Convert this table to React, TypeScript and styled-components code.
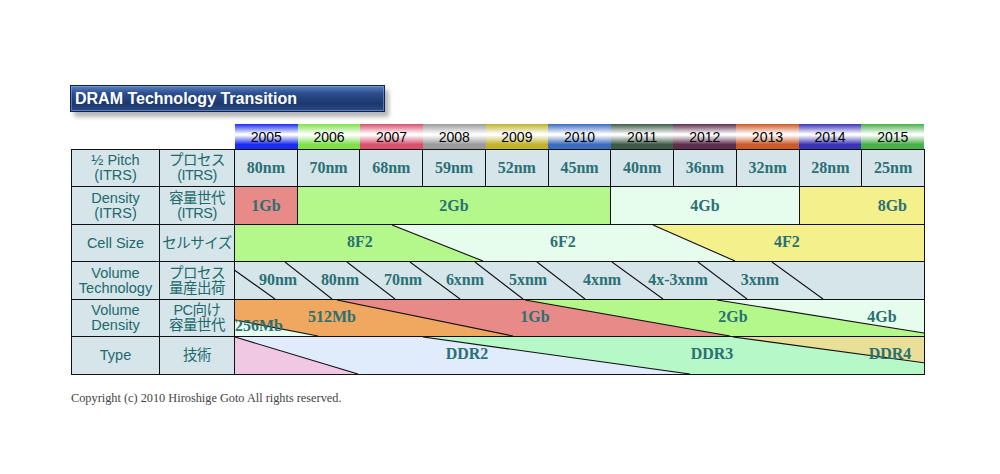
import React from "react";
import styled, { createGlobalStyle } from "styled-components";

const GlobalStyle = createGlobalStyle`
  html, body { margin: 0; padding: 0; background: #ffffff; }
  body { font-family: "Liberation Sans", Arial, sans-serif; }
`;

const TEAL = "#22696d";
const DATA_TEAL = "#2b7074";
const LABEL_BG = "#d5e5e9";

const Page = styled.div`
  padding: 85px 0 0 70px;
  width: 1000px;
  height: 474px;
  box-sizing: border-box;
`;

const TitleBar = styled.div`
  width: 315px;
  height: 27px;
  box-sizing: border-box;
  border: 1px solid #0b2350;
  background: linear-gradient(180deg, #5b7fbd 0%, #2c4d8c 30%, #1b386f 70%, #2a4a86 100%);
  box-shadow: inset 0 0 0 1px rgba(140, 170, 220, 0.55), 4px 5px 4px rgba(0, 0, 0, 0.28);
  color: #ffffff;
  font-family: "Liberation Sans", Arial, sans-serif;
  font-weight: bold;
  font-size: 16px;
  line-height: 25px;
  padding-left: 4px;
  white-space: nowrap;
`;

const Chart = styled.div`
  margin: 12px 0 0 1px;
  width: 854px;
`;

const HeaderRow = styled.div`
  display: flex;
  margin-left: 164px;
  width: 689px;
  height: 25px;
`;

const YearCell = styled.div<{ $c: string }>`
  flex: 1;
  display: flex;
  align-items: center;
  justify-content: center;
  background: linear-gradient(180deg, ${(p) => p.$c} 0%, #ffffff 40%, #ffffff 44%, ${(p) => p.$c} 82%, ${(p) => p.$c} 100%);
  font-family: "Liberation Sans", Arial, sans-serif;
  font-size: 14px;
  color: #000000;
  padding-top: 1px;
  box-sizing: border-box;
`;

const Body = styled.div`
  display: grid;
  grid-template-columns: 87px 74px repeat(11, 1fr);
  grid-template-rows: 36px 37px 36px 37px 36px 37px;
  gap: 1px;
  background: #111111;
  border: 1px solid #111111;
  width: 854px;
  box-sizing: border-box;
`;

const LabelCell = styled.div<{ $jp?: boolean }>`
  background: ${LABEL_BG};
  display: flex;
  align-items: center;
  justify-content: center;
  text-align: center;
  color: ${TEAL};
  font-family: ${(p) =>
    p.$jp
      ? `"Liberation Sans", "Noto Sans CJK JP", sans-serif`
      : `"Liberation Sans", Arial, sans-serif`};
  font-size: 14.5px;
  line-height: 15px;
  white-space: nowrap;
  letter-spacing: ${(p) => (p.$jp ? "-0.5px" : "0")};
`;

const DataCell = styled.div<{ $bg: string; $span?: number; $end?: boolean }>`
  background: ${(p) => p.$bg};
  grid-column: span ${(p) => p.$span ?? 1};
  display: flex;
  align-items: center;
  justify-content: ${(p) => (p.$end ? "flex-end" : "center")};
  padding-right: ${(p) => (p.$end ? "17px" : "0")};
  font-family: "Liberation Serif", "Times New Roman", serif;
  font-weight: bold;
  font-size: 16px;
  color: ${DATA_TEAL};
`;

const DiagramCell = styled.div`
  grid-column: span 11;
  overflow: hidden;
  background: ${LABEL_BG};
  svg {
    display: block;
    width: 100%;
    height: 100%;
  }
  text {
    font-family: "Liberation Serif", "Times New Roman", serif;
    font-weight: bold;
    font-size: 16px;
    fill: ${DATA_TEAL};
  }
`;

const Copyright = styled.div`
  margin-top: 16px;
  font-family: "Liberation Serif", "Times New Roman", serif;
  font-size: 12.3px;
  color: #444444;
`;

const years: [string, string][] = [
  ["2005", "#1b2cf5"],
  ["2006", "#7fe04a"],
  ["2007", "#d8506e"],
  ["2008", "#9a9a9a"],
  ["2009", "#c0b22a"],
  ["2010", "#3c6cc0"],
  ["2011", "#3e5a48"],
  ["2012", "#5e2e4e"],
  ["2013", "#cc5a28"],
  ["2014", "#3a34b8"],
  ["2015", "#48b048"],
];

const pitches = ["80nm", "70nm", "68nm", "59nm", "52nm", "45nm", "40nm", "36nm", "32nm", "28nm", "25nm"];

type Poly = { pts: string; fill: string };
type Line = [number, number, number, number];
type Label = { x: number; y: number; t: string; anchor?: "start" | "middle" };

const Diagram: React.FC<{ polys: Poly[]; lines: Line[]; labels: Label[] }> = ({ polys, lines, labels }) => (
  <DiagramCell>
    <svg viewBox="0 0 689 36" preserveAspectRatio="none">
      {polys.map((p, i) => (
        <polygon key={i} points={p.pts} fill={p.fill} />
      ))}
      {lines.map(([x1, y1, x2, y2], i) => (
        <line key={i} x1={x1} y1={y1} x2={x2} y2={y2} stroke="#111" strokeWidth={1.1} />
      ))}
      {labels.map((l, i) => (
        <text key={i} x={l.x} y={l.y} textAnchor={l.anchor ?? "middle"} dominantBaseline="central">
          {l.t}
        </text>
      ))}
    </svg>
  </DiagramCell>
);

const cellSize = {
  polys: [
    { pts: "0,0 157,0 248,36 0,36", fill: "#b4f88c" },
    { pts: "157,0 418,0 500,36 248,36", fill: "#e6fcec" },
    { pts: "418,0 689,0 689,36 500,36", fill: "#f4f08c" },
  ],
  lines: [
    [157, 0, 248, 36],
    [418, 0, 500, 36],
  ] as Line[],
  labels: [
    { x: 125, y: 17, t: "8F2" },
    { x: 328, y: 17, t: "6F2" },
    { x: 552, y: 17, t: "4F2" },
  ],
};

const volTech = {
  polys: [] as Poly[],
  lines: [
    [-12, 0, 40, 36],
    [50, 0, 97, 36],
    [112, 0, 160, 36],
    [175, 0, 225, 36],
    [240, 0, 288, 36],
    [302, 0, 350, 36],
    [377, 0, 428, 36],
    [463, 0, 512, 36],
    [537, 0, 588, 36],
  ] as Line[],
  labels: [
    { x: 43, y: 17, t: "90nm" },
    { x: 105, y: 17, t: "80nm" },
    { x: 168, y: 17, t: "70nm" },
    { x: 230, y: 17, t: "6xnm" },
    { x: 293, y: 17, t: "5xnm" },
    { x: 367, y: 17, t: "4xnm" },
    { x: 443, y: 17, t: "4x-3xnm" },
    { x: 525, y: 17, t: "3xnm" },
  ],
};

const volDensity = {
  polys: [
    { pts: "0,0 689,0 689,36 0,36", fill: "#e6fcec" },
    { pts: "290,0 482,0 689,33 689,36 495,36", fill: "#b4f88c" },
    { pts: "102,0 290,0 495,36 278,36", fill: "#e88a88" },
    { pts: "0,0 102,0 278,36 83,36 0,20", fill: "#f0a860" },
    { pts: "0,20 83,36 0,36", fill: "#e8fcf0" },
  ],
  lines: [
    [0, 20, 83, 36],
    [102, 0, 278, 36],
    [290, 0, 495, 36],
    [482, 0, 689, 33],
  ] as Line[],
  labels: [
    { x: 97, y: 17, t: "512Mb" },
    { x: 300, y: 17, t: "1Gb" },
    { x: 498, y: 17, t: "2Gb" },
    { x: 647, y: 17, t: "4Gb" },
    { x: 0, y: 26, t: "256Mb", anchor: "start" as const },
  ],
};

const typeRow = {
  polys: [
    { pts: "0,0 689,0 689,36 0,36", fill: "#b6f8c8" },
    { pts: "498,0 689,0 689,25 ", fill: "#e8e098" },
    { pts: "0,0 188,0 455,36 0,36", fill: "#e0ecfc" },
    { pts: "0,0 123,36 0,36", fill: "#f0c8e4" },
  ],
  lines: [
    [0, 0, 123, 36],
    [188, 0, 455, 36],
    [498, 0, 689, 25],
  ] as Line[],
  labels: [
    { x: 232, y: 16, t: "DDR2" },
    { x: 477, y: 16, t: "DDR3" },
    { x: 655, y: 16, t: "DDR4" },
  ],
};

const Two: React.FC<{ a: string; b?: string }> = ({ a, b }) => (
  <span>
    {a}
    {b && (
      <>
        <br />
        {b}
      </>
    )}
  </span>
);

export default function App() {
  return (
    <>
      <GlobalStyle />
      <Page>
        <TitleBar>DRAM Technology Transition</TitleBar>
        <Chart>
          <HeaderRow>
            {years.map(([y, c]) => (
              <YearCell key={y} $c={c}>
                {y}
              </YearCell>
            ))}
          </HeaderRow>
          <Body>
            <LabelCell>
              <Two a="½ Pitch" b="(ITRS)" />
            </LabelCell>
            <LabelCell $jp>
              <Two a="プロセス" b="(ITRS)" />
            </LabelCell>
            {pitches.map((p) => (
              <DataCell key={p} $bg={LABEL_BG}>
                {p}
              </DataCell>
            ))}

            <LabelCell>
              <Two a="Density" b="(ITRS)" />
            </LabelCell>
            <LabelCell $jp>
              <Two a="容量世代" b="(ITRS)" />
            </LabelCell>
            <DataCell $bg="#e88a88">1Gb</DataCell>
            <DataCell $bg="#b4f88c" $span={5}>
              2Gb
            </DataCell>
            <DataCell $bg="#e6fcec" $span={3}>
              4Gb
            </DataCell>
            <DataCell $bg="#f4f08c" $span={2} $end>
              8Gb
            </DataCell>

            <LabelCell>
              <Two a="Cell Size" />
            </LabelCell>
            <LabelCell $jp>
              <Two a="セルサイズ" />
            </LabelCell>
            <Diagram {...cellSize} />

            <LabelCell>
              <Two a="Volume" b="Technology" />
            </LabelCell>
            <LabelCell $jp>
              <Two a="プロセス" b="量産出荷" />
            </LabelCell>
            <Diagram {...volTech} />

            <LabelCell>
              <Two a="Volume" b="Density" />
            </LabelCell>
            <LabelCell $jp>
              <Two a="PC向け" b="容量世代" />
            </LabelCell>
            <Diagram {...volDensity} />

            <LabelCell>
              <Two a="Type" />
            </LabelCell>
            <LabelCell $jp>
              <Two a="技術" />
            </LabelCell>
            <Diagram {...typeRow} />
          </Body>
          <Copyright>Copyright (c) 2010 Hiroshige Goto All rights reserved.</Copyright>
        </Chart>
      </Page>
    </>
  );
}
